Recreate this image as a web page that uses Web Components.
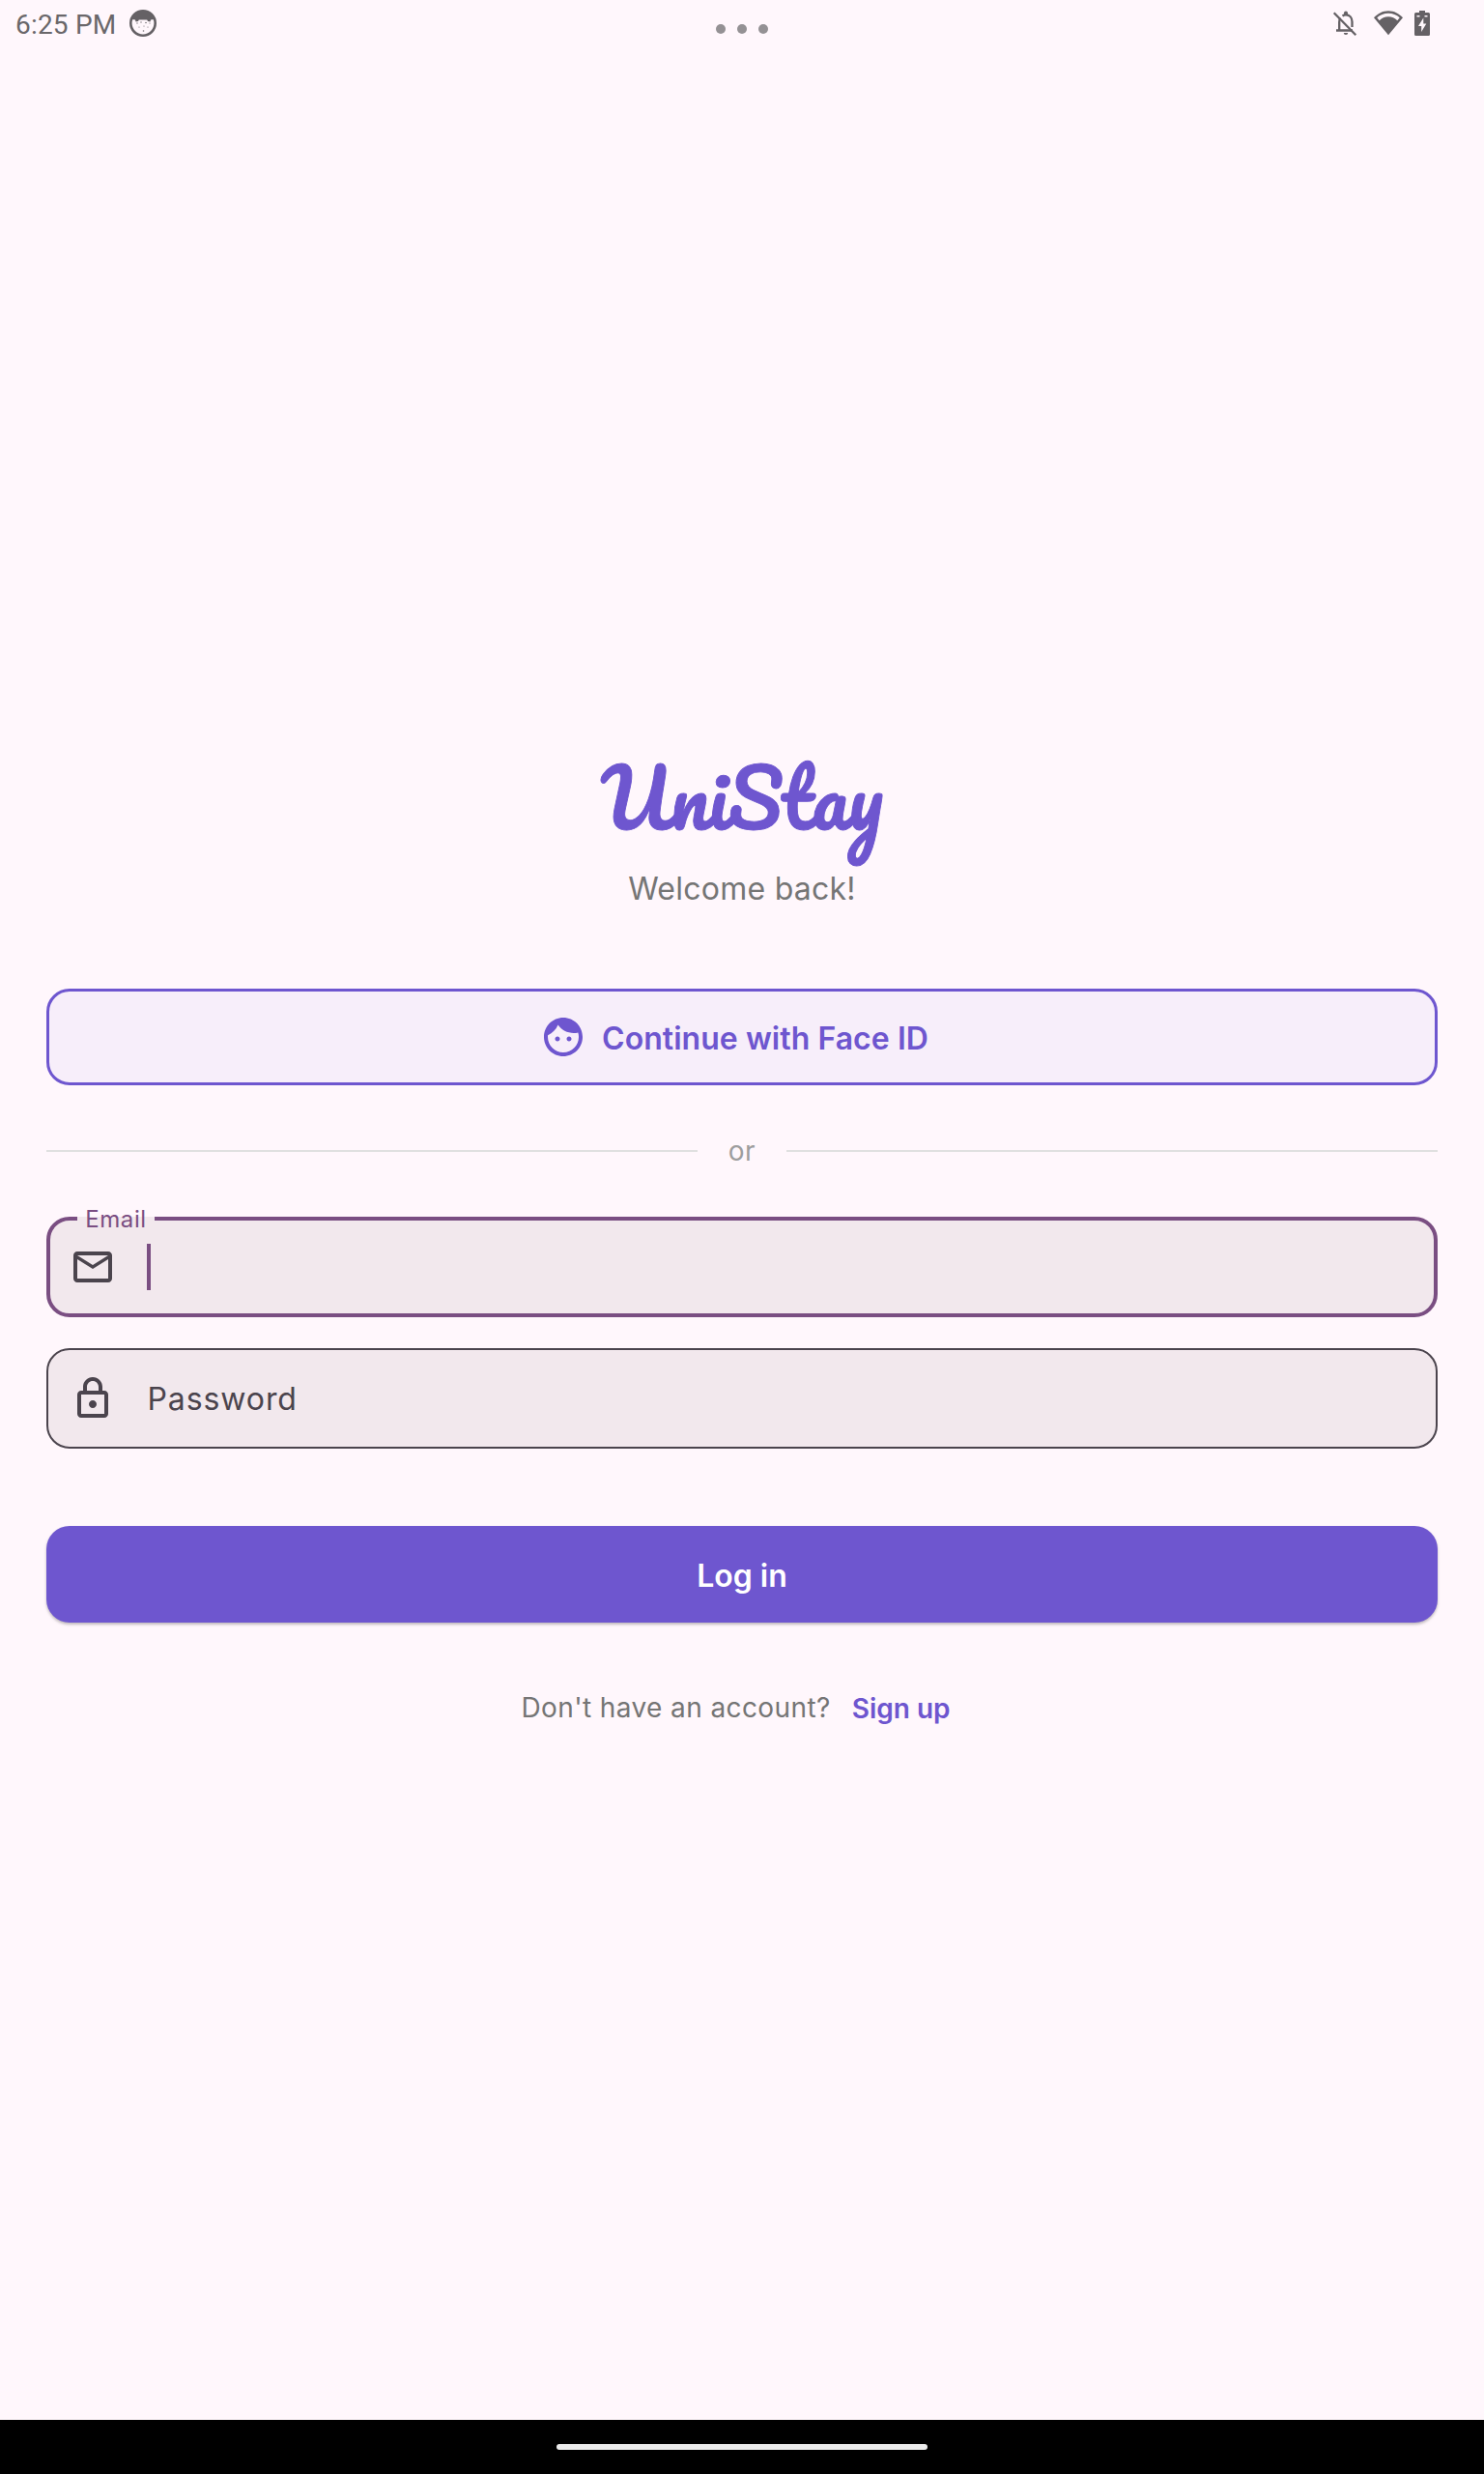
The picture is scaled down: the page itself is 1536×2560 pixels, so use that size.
<!DOCTYPE html>
<html lang="en">
<head>
<meta charset="utf-8">
<title>UniStay</title>
<style>
html,body{margin:0;background:#fff7fc}
body{width:1536px;height:2560px;overflow:hidden;font-family:Inter,"Liberation Sans",sans-serif}
</style>
</head>
<body>
<login-screen></login-screen>
<script>
const define = (name, html) => customElements.define(name, class extends HTMLElement {
  constructor() {
    super();
    const t = document.createElement('template');
    t.innerHTML = html;
    this.attachShadow({mode: 'open'}).append(t.content.cloneNode(true));
  }
});

const glyphs = {
  face: '<path d="M9 11.75c-.69 0-1.25.56-1.25 1.25s.56 1.25 1.25 1.25 1.25-.56 1.25-1.25-.56-1.25-1.25-1.25zm6 0c-.69 0-1.25.56-1.25 1.25s.56 1.25 1.25 1.25 1.25-.56 1.25-1.25-.56-1.25-1.25-1.25zM12 2C6.48 2 2 6.48 2 12s4.48 10 10 10 10-4.48 10-10S17.52 2 12 2zm0 18c-4.41 0-8-3.59-8-8 0-.29.02-.58.05-.86 2.36-1.05 4.23-2.98 5.21-5.37C11.07 8.33 14.05 10 17.42 10c.78 0 1.53-.09 2.25-.26.21.71.33 1.47.33 2.26 0 4.41-3.59 8-8 8z"/>',
  mail: '<path d="M22 6c0-1.1-.9-2-2-2H4c-1.1 0-2 .9-2 2v12c0 1.1.9 2 2 2h16c1.1 0 2-.9 2-2V6zm-2 0l-8 5-8-5h16zm0 12H4V8l8 5 8-5v10z"/>',
  lock: '<path d="M18 8h-1V6c0-2.76-2.24-5-5-5S7 3.24 7 6v2H6c-1.1 0-2 .9-2 2v10c0 1.1.9 2 2 2h12c1.1 0 2-.9 2-2V10c0-1.1-.9-2-2-2zM9 6c0-1.66 1.34-3 3-3s3 1.34 3 3v2H9V6zm9 14H6V10h12v10zm-6-3c1.1 0 2-.9 2-2s-.9-2-2-2-2 .9-2 2 .9 2 2 2z"/>'
};
customElements.define('md-icon', class extends HTMLElement {
  constructor() {
    super();
    this.attachShadow({mode: 'open'});
  }
  connectedCallback() {
    this.shadowRoot.innerHTML = `<style>:host{display:block;width:48px;height:48px;flex:none}svg{display:block}</style>
      <svg width="48" height="48" viewBox="0 0 24 24" fill="currentColor">${glyphs[this.getAttribute('name')]}</svg>`;
  }
});

define('status-bar', `<style>
:host{display:grid;grid-template-columns:repeat(3,minmax(0,1fr));height:60px;color:#6a676a;font:28px/60px Roboto,sans-serif}
div{display:flex}
.left{padding-left:16px;gap:13px;box-sizing:border-box}
.time{margin-top:-4px;white-space:nowrap;letter-spacing:.2px}
.dots{justify-content:center;gap:12px;padding-top:25px}
.dots i{width:10px;height:10px;border-radius:50%;background:#949194}
.right{justify-content:flex-end;padding-right:56px;box-sizing:border-box}
svg{display:block;flex:none}
</style>
<div class="left"><span class="time">6:25 PM</span>
<svg width="30" height="30" viewBox="0 0 30 30" style="margin-top:9px"><circle cx="15" cy="15" r="12.7" fill="none" stroke="#656165" stroke-width="2.600"/><path fill="#656165" d="M3.500 11C6 4 11 2 15 2s9 2 11.500 9l-3.500.5-.5 2-2.500-.5-.8-1.400h-8.400L10 13l-2.500.5L7 11.500z"/><g fill="#777377"><circle cx="9" cy="15" r=".7"/><circle cx="13" cy="14" r=".7"/><circle cx="18" cy="14.500" r=".8"/><circle cx="22" cy="15" r=".6"/><circle cx="11" cy="19" r=".6"/><circle cx="16" cy="18" r=".6"/><circle cx="20" cy="19" r=".6"/><circle cx="15.500" cy="23" r=".8"/></g></svg></div>
<div class="dots"><i></i><i></i><i></i></div>
<div class="right">
<svg width="104" height="60" viewBox="0 0 104 60" fill="#656165">
<g fill="none" stroke="#656165" stroke-width="2.300"><path d="M4.700 13.300 27.300 36.300"/><path d="M10.200 32V23c0-1.800.3-3.200 1-4.500M13.500 16.500c1-.7 2.200-1.100 3.500-1.100 4 0 6.500 3.200 6.500 7.200V28M7 31.500h17"/></g>
<path d="M15 15.500V13.500a2 2 0 0 1 4 0v2zM14.800 34h4.400a2.200 2 0 0 1-4.400 0z"/>
<path fill-rule="evenodd" d="M61 36.300 46 18.200C50 14 55 11.200 61 11.200s11 2.800 15 7zM49.300 18.200l2.400 3C54.300 18.700 57.300 17.300 61 17.300s6.700 1.400 9.300 3.900l2.400-3C69.500 15.300 65.500 13.700 61 13.700s-8.500 1.600-11.700 4.500z"/>
<path fill-rule="evenodd" d="M93 11h6v2h3.500Q104 13 104 14.500v21Q104 37 102.500 37h-13Q88 37 88 35.500v-21Q88 13 89.500 13H93zM97.300 18.500 92 27h3.200v6L100.300 24.500h-3zM90.500 16h3v1.500h-3zM98.500 16h3v1.500h-3z"/>
</svg></div>`);

define('brand-title', `<style>
:host{display:flex;justify-content:center;height:130px;color:#6e56cf}
span{display:block;font:400 80.500px/120px Pacifico,Lato,cursive;white-space:nowrap;-webkit-text-stroke:.9px #6e56cf}
</style><span><slot></slot></span>`);

define('face-button', `<style>
:host{display:flex;box-sizing:border-box;height:100px;border:3px solid #6e56cf;border-radius:24px;background:#f7eefa;color:#6e56cf;align-items:center;justify-content:center;gap:16px;padding-right:16px;font-weight:600;font-size:32px;line-height:48px}
span{padding-top:3px;white-space:nowrap;letter-spacing:.05px}
</style><md-icon name="face"></md-icon><span><slot></slot></span>`);

define('or-divider', `<style>
:host{display:flex;align-items:center;height:40px;margin:48px 0;font-size:28px;line-height:40px;color:#9e9e9e}
i{flex:1;height:2px;background:#e0e0e0}
span{width:92px;text-align:center;letter-spacing:.5px}
</style><i></i><span><slot></slot></span><i></i>`);

define('text-field', `<style>
:host{display:flex;position:relative;box-sizing:border-box;height:104px;border:2px solid #4b444d;border-radius:24px;background:#f2e8ed;align-items:center;padding-left:22px;gap:32px;color:#4b444d;font-size:32px;line-height:48px;letter-spacing:.9px}
:host([focused]){border:4px solid #7a4e82;padding-left:20px}
.value{padding:2px 0 0 .5px}
.caret{display:none;width:4px;height:48px;background:#7a4e82}
.label{display:none}
:host([focused]) .value{display:none}
:host([focused]) .caret{display:block}
:host([focused]) .label{display:block;position:absolute;left:28px;top:-4px;width:80px;height:4px;background:#f2e8ed;color:#7a4e82;font-size:24px;line-height:6px;text-align:center;letter-spacing:.6px}
.label b{font-weight:400;display:block}
</style><md-icon></md-icon><span class="value"><slot></slot></span><span class="caret"></span><span class="label"><b><slot name="label"></slot></b></span>`);
customElements.define('field-row', class extends HTMLElement {
  constructor() {
    super();
    this.attachShadow({mode: 'open'});
  }
  connectedCallback() {
    const field = document.createElement('text-field');
    const focused = this.hasAttribute('focused');
    if (focused) field.setAttribute('focused', '');
    const label = document.createElement('span');
    label.textContent = this.getAttribute('label');
    if (focused) label.slot = 'label';
    field.append(label);
    field.shadowRoot.querySelector('md-icon').setAttribute('name', this.getAttribute('icon'));
    this.shadowRoot.innerHTML = '<style>:host{display:block}</style>';
    this.shadowRoot.append(field);
  }
});

define('login-button', `<style>
:host{display:flex;height:100px;border-radius:24px;background:#6e56cf;color:#fff;align-items:center;justify-content:center;font-weight:600;font-size:32px;line-height:48px;box-shadow:0 2px 3px rgba(0,0,0,.25)}
span{padding-top:3px}
</style><span><slot></slot></span>`);

define('signup-row', `<style>
:host{display:flex;justify-content:center;align-items:center;height:96px;font-size:28px;line-height:40px}
.q{color:#757575;letter-spacing:.4px;white-space:nowrap}
.a{color:#6e56cf;font-weight:600;margin-left:22px;margin-right:13px;padding-top:2px}
</style><span class="q"><slot></slot></span><span class="a"><slot name="action"></slot></span>`);

define('home-bar', `<style>
:host{display:flex;height:56px;background:#000;justify-content:center;align-items:center}
i{width:384px;height:6px;border-radius:3px;background:#ececec}
</style><i></i>`);

define('login-screen', `<style>
:host{display:flex;flex-direction:column;height:2560px;width:1536px;background:#fff7fc}
main{flex:1;padding:705px 48px 0}
.welcome{height:48px;line-height:49px;font-size:32px;letter-spacing:.25px;color:#757575;text-align:center;margin-bottom:80px}
.pw{margin-top:32px;margin-bottom:80px}
signup-row{margin-top:40px}
</style>
<status-bar></status-bar>
<main>
<brand-title>UniStay</brand-title>
<div class="welcome">Welcome back!</div>
<face-button>Continue with Face ID</face-button>
<or-divider>or</or-divider>
<field-row label="Email" icon="mail" focused></field-row>
<field-row class="pw" label="Password" icon="lock"></field-row>
<login-button>Log in</login-button>
<signup-row>Don't have an account?<span slot="action">Sign up</span></signup-row>
</main>
<home-bar></home-bar>`);
</script>
</body>
</html>
